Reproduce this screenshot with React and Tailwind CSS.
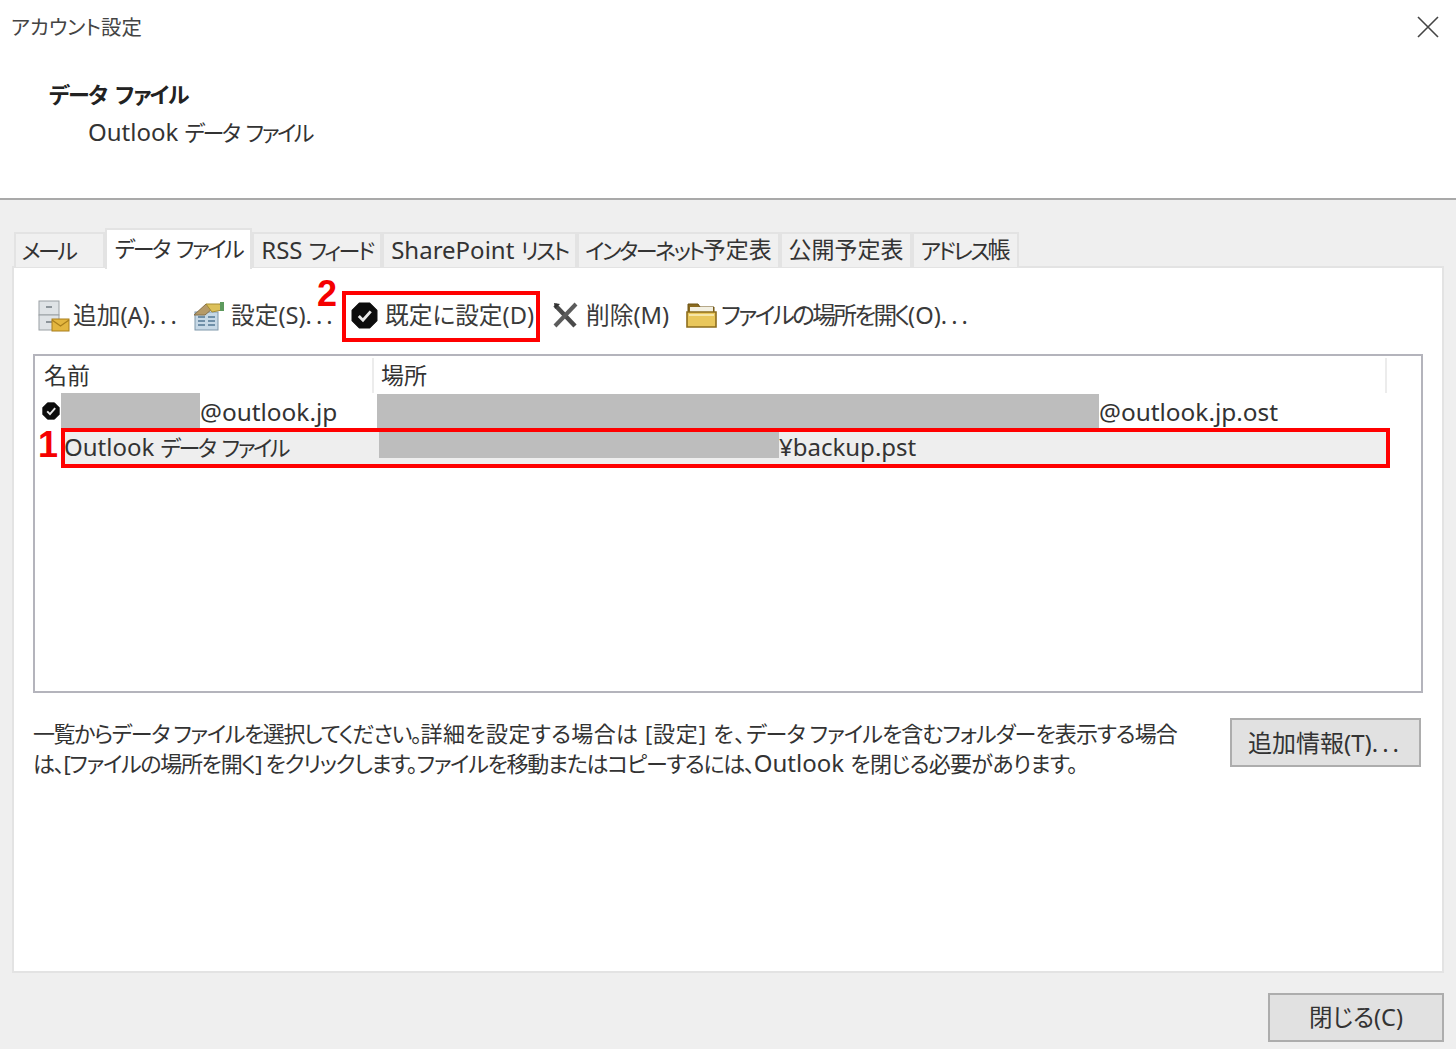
const FONT = "font-['Noto_Sans','Noto_Sans_CJK_JP',sans-serif] [font-feature-settings:'palt']";

// the screenshot's kana run narrower than Noto's, so squeeze them
const K = ({ children }) => <span className="text-[22px] tracking-[-2.5px] [word-spacing:4px]">{children}</span>;
const Dots = () => <span className="tracking-[4px]">...</span>;

const TABS = [
  { label: <K>メール</K>, w: 'w-[91px]', pad: 'pr-[22px]' },
  { label: <K>データ ファイル</K>, w: 'w-[147px]', active: true },
  { label: <>RSS <K>フィード</K></>, w: 'w-[130px]', pad: 'text-[24px]' },
  { label: <>SharePoint <K>リスト</K></>, w: 'w-[195px]', pad: 'text-[24px]' },
  { label: <><K>インターネット</K>予定表</>, w: 'w-[203px]' },
  { label: '公開予定表', w: 'w-[132px]' },
  { label: <><K>アドレス</K>帳</>, w: 'w-[107px]' },
];

const CheckIcon = ({ size }) => (
  <svg width={size} height={size} viewBox="0 0 26 26" className="shrink-0">
    <path d="M8 1h10l7 7v10l-7 7H8l-7-7V8z" fill="#0c0c0c" stroke="#0c0c0c" strokeWidth="1" strokeLinejoin="round" />
    <path d="M7.5 13.5l4 4 7.5-8.5" fill="none" stroke="#e8e8e8" strokeWidth="2.8" />
  </svg>
);

const AddIcon = () => (
  <svg width="32" height="32" viewBox="0 0 32 32" className="shrink-0">
    <rect x="1" y="1" width="20" height="14" fill="#dfe3e6" stroke="#9aa0a4" />
    <rect x="1" y="15" width="20" height="15" fill="#dfe3e6" stroke="#9aa0a4" />
    <rect x="8" y="6" width="6" height="2" fill="#8d959b" />
    <rect x="8" y="21" width="6" height="2" fill="#8d959b" />
    <rect x="14" y="19" width="17" height="12" fill="#e3b63f" stroke="#a97f1c" />
    <path d="M14 20l8.5 6 8.5-6" fill="none" stroke="#a97f1c" strokeWidth="1.2" />
  </svg>
);

const SettingsIcon = () => (
  <svg width="32" height="30" viewBox="0 0 32 30" className="shrink-0">
    <rect x="2" y="11" width="23" height="18" fill="#c6d8e6" stroke="#7f97aa" />
    <path d="M5 16h7M5 20h7M5 24h7M15 16h7M15 20h7M15 24h7" stroke="#6f8fa8" strokeWidth="2" />
    <path d="M1 14L13 3l6 5-7 6z" fill="#b59a68" stroke="#86704a" />
    <path d="M13 3l14 0 2 6-10 2z" fill="#dcc05a" stroke="#a58c33" />
    <rect x="27" y="1" width="4" height="9" fill="#5d9a5d" />
  </svg>
);

const DeleteIcon = () => (
  <svg width="27" height="27" viewBox="0 0 27 27" className="shrink-0">
    <path d="M3 3l20 21" stroke="#4a4a4a" strokeWidth="4.5" />
    <path d="M24 2L3 24" stroke="#5c5c5c" strokeWidth="4" />
    <path d="M2 1l6 1-5 5z" fill="#333" />
  </svg>
);

const FolderIcon = () => (
  <svg width="32" height="27" viewBox="0 0 32 27" className="shrink-0">
    <path d="M2 5V2h10l2 3h14v5H2z" fill="#8a6a1e" stroke="#6d5314" />
    <rect x="4" y="5" width="23" height="6" fill="#f3f0e2" />
    <path d="M1 10h29v15H1z" fill="#e9c75c" stroke="#8d6d1d" strokeWidth="1.6" />
    <rect x="3" y="12" width="25" height="2" fill="#f6e6a8" />
  </svg>
);

const ToolItem = ({ icon, label, className }) => (
  <div className={`flex items-center ${className}`}>
    {icon}
    <span className="whitespace-nowrap">{label}</span>
  </div>
);

const Btn = ({ className, children }) => (
  <div className={`flex items-center justify-center bg-[#e1e1e1] border-2 border-[#adadad] text-[#333] whitespace-nowrap ${className}`}>
    {children}
  </div>
);

export default function App() {
  return (
    <div className={`${FONT} relative w-[1456px] h-[1049px] overflow-hidden bg-[#efefef] text-[#333] text-[23px] leading-none`}>

      {/* header */}
      <div className="h-[200px] bg-white border-b-2 border-[#a9a9a9]">
        <div className="flex items-center justify-between pl-[11px] pr-[17px] h-[54px]">
          <span className="text-[20.4px] text-[#444]">アカウント設定</span>
          <svg width="22" height="22" viewBox="0 0 22 22">
            <path d="M1 1l20 20M21 1L1 21" stroke="#444" strokeWidth="1.6" />
          </svg>
        </div>
        <div className="mt-[20px] pl-[49px] text-[22px] tracking-[-1.4px] [word-spacing:4px] font-bold text-[#222] h-[40px] flex items-center">データ ファイル</div>
        <div className="pl-[88px] text-[24px] h-[36px] flex items-center whitespace-pre">Outlook <K>データ ファイル</K></div>
      </div>

      {/* tabs */}
      <div className="flex items-end h-[67px] pl-[14px]">
        {TABS.map((t, i) => (
          <div
            key={i}
            className={`flex items-center justify-center whitespace-pre border-2 border-b-0 border-[#e3e3e3] ${t.w} ${t.pad || ''} ${t.active ? 'h-[41px] bg-white relative z-10 -mb-[2px] pb-[3px]' : 'h-[35px] pb-[2px] bg-[#f0f0f0]'}`}
          >
            {t.label}
          </div>
        ))}
      </div>

      {/* tab panel */}
      <div className="ml-[12px] w-[1432px] h-[707px] bg-white border-2 border-[#e3e3e3] px-[19px] -mt-[1px]">
        <div className="flex items-center h-[86px] pt-[9px] text-[#3a3a3a] text-[23.7px] pl-[5px]">
          <ToolItem icon={<AddIcon />} label={<>追加(A)<Dots /></>} className="gap-[3px] w-[155px]" />
          <ToolItem icon={<SettingsIcon />} label={<>設定(S)<Dots /></>} className="gap-[6px] w-[158px]" />
          <ToolItem icon={<CheckIcon size={27} />} label="既定に設定(D)" className="gap-[7px] w-[201px]" />
          <ToolItem icon={<DeleteIcon />} label="削除(M)" className="gap-[7px] w-[134px]" />
          <ToolItem icon={<FolderIcon />} label={<><span className="tracking-[-2.7px]">ファイルの場所を開く</span>(O)<Dots /></>} className="gap-[3px]" />
        </div>

        {/* list */}
        <div className="w-[1390px] h-[339px] border-2 border-[#b4b4bc]">
          <div className="flex h-[37px] items-center pt-[2px]">
            <div className="w-[339px] h-full flex items-center pl-[9px] border-r-2 border-[#ececec]">名前</div>
            <div className="w-[1013px] h-full flex items-center pl-[7px] border-r-2 border-[#ececec]">場所</div>
          </div>
          <div className="flex h-[36px] items-center text-[24.4px]">
            <div className="w-[340px] h-full flex items-center pl-[7px]">
              <CheckIcon size={18} />
              <div className="w-[139px] h-[37px] ml-[1px] bg-[#bdbdbd]" />
              <span className="pt-[2px]">@outlook.jp</span>
            </div>
            <div className="h-full flex items-center ml-[2px]">
              <div className="w-[722px] h-[35px] bg-[#bdbdbd]" />
              <span className="pt-[2px]">@outlook.jp.ost</span>
            </div>
          </div>
          <div className="flex h-[36px] items-center ml-[28px] w-[1325px] bg-[#eeeeee] text-[24px]">
            <div className="w-[316px] pl-[1px] whitespace-pre">Outlook <K>データ ファイル</K></div>
            <div className="w-[400px] h-[26px] mb-[4px] bg-[#bdbdbd]" />
            <span>¥backup.pst</span>
          </div>
        </div>

        {/* description */}
        <div className="flex justify-between mt-[25px] w-[1388px]">
          <p className="text-[22px] leading-[30px] whitespace-pre">
            <span className="tracking-[-1.4px]">一覧からデータ ファイルを選択してください。</span>
            <span className="tracking-[0.4px]">詳細を設定する場合は</span>
            <span className="tracking-[0.8px]"> [設定] を、</span>
            <span className="tracking-[-0.95px]">データ ファイルを含むフォルダーを表示する場合</span>
            <br />
            <span className="tracking-[-1.3px]">は、[ファイルの場所を開く] をクリックします。ファイルを移動またはコピーするには、</span>
            <span className="text-[24px]">Outlook </span>
            <span className="tracking-[-0.7px]">を閉じる必要があります。</span>
          </p>
          <Btn className="w-[191px] h-[49px] text-[24px]">追加情報(T)<Dots /></Btn>
        </div>
      </div>

      {/* footer */}
      <div className="flex justify-end pr-[12px] pt-[20px]">
        <Btn className="w-[176px] h-[49px] text-[23.5px]">閉じる(C)</Btn>
      </div>

      {/* annotations */}
      <div className="absolute left-[342px] top-[291px] w-[198px] h-[51px] border-[4px] border-[#ff0000]" />
      <div className="absolute left-[61px] top-[428px] w-[1329px] h-[40px] border-[4px] border-[#ff0000]" />
      <span className="absolute left-[317px] top-[284px] text-[36px] leading-[20px] font-bold text-[#f50000] font-['Liberation_Sans']">2</span>
      <span className="absolute left-[38px] top-[427px] text-[36px] font-bold text-[#f50000] font-['Liberation_Sans']">1</span>
    </div>
  );
}
